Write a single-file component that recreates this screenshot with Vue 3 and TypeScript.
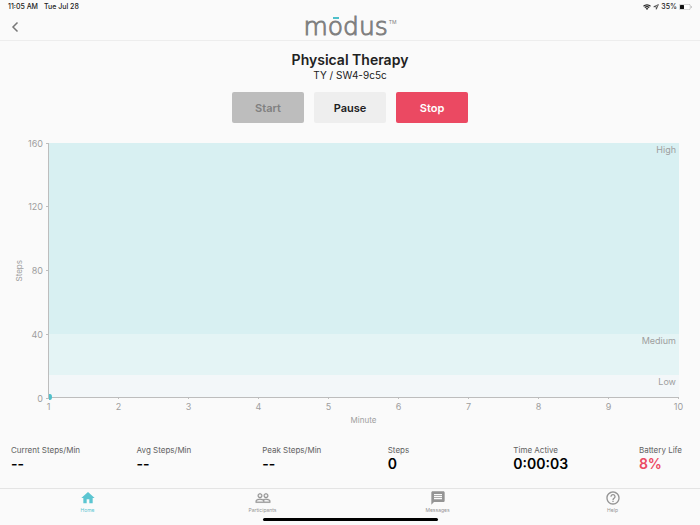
<script setup lang="ts">
interface Band {
  name: string
  from: number
  to: number
}
interface Stat {
  label: string
  value: string
  tone?: string
}

const maxSteps = 160
const yTicks: number[] = [160, 120, 80, 40, 0]
const xTicks: number[] = [1, 2, 3, 4, 5, 6, 7, 8, 9, 10]
const bands: Band[] = [
  { name: 'High', from: 40, to: 160 },
  { name: 'Medium', from: 14, to: 40 },
  { name: 'Low', from: 0, to: 14 },
]
const stats: Stat[] = [
  { label: 'Current Steps/Min', value: '--' },
  { label: 'Avg Steps/Min', value: '--' },
  { label: 'Peak Steps/Min', value: '--' },
  { label: 'Steps', value: '0' },
  { label: 'Time Active', value: '0:00:03' },
  { label: 'Battery Life', value: '8%', tone: 'alert' },
]
const bandHeight = (b: Band): string => `${((b.to - b.from) / maxSteps) * 100}%`
</script>

<template>
  <div class="app">
    <div class="status">
      <span>11:05 AM</span>
      <span>Tue Jul 28</span>
      <span class="spacer"></span>
      <svg class="wifi" viewBox="0 0 16 12" aria-hidden="true">
        <path d="M1 4.5a10 10 0 0 1 14 0M3.6 7.3a6.300 6.300 0 0 1 8.800 0" fill="none" stroke="#222" stroke-width="2.300" />
        <path d="M8 12 5.300 9.200a3.900 3.900 0 0 1 5.400 0z" fill="#222" />
      </svg>
      <svg class="locate" viewBox="0 0 12 12" aria-hidden="true">
        <path d="M10.800 1.200 1.500 5.400h5.100v5.100z" fill="none" stroke="#333" stroke-width="1.500" stroke-linejoin="round" />
      </svg>
      <span class="charge">35%</span>
      <svg class="battery" viewBox="0 0 26 12" aria-hidden="true">
        <rect x=".5" y=".5" width="22" height="11" rx="3" fill="#fff" stroke="#999" />
        <rect x="2" y="2" width="8" height="8" rx="1" fill="#111" />
        <path d="M24 4c2 .5 2 3.500 0 4z" fill="#999" />
      </svg>
    </div>

    <header class="header">
      <button class="back" type="button" aria-label="Back">
        <svg viewBox="0 0 8 12" aria-hidden="true">
          <path d="M6.500 1.500 2 6l4.500 4.500" fill="none" stroke="#777" stroke-width="1.500" />
        </svg>
      </button>
      <div class="logo">
        <span class="word">m<span class="macron">o</span>dus</span>
        <span class="tm">TM</span>
      </div>
    </header>

    <main class="main">
      <h1 class="title">Physical Therapy</h1>
      <p class="subject">TY / SW4-9c5c</p>
      <div class="actions">
        <button class="btn start" type="button" disabled>Start</button>
        <button class="btn pause" type="button">Pause</button>
        <button class="btn stop" type="button">Stop</button>
      </div>

      <section class="chart">
        <div class="y-title"><span>Steps</span></div>
        <div class="y-axis">
          <div v-for="t in yTicks" :key="t" class="y-tick"><span>{{ t }}</span><i></i></div>
        </div>
        <div class="plot">
          <div v-for="b in bands" :key="b.name" class="band" :class="b.name.toLowerCase()" :style="{ height: bandHeight(b) }">
            {{ b.name }}
          </div>
          <svg class="point" viewBox="0 0 3 6" aria-hidden="true"><path d="M0 0h1a2 3 0 0 1 0 6h-1z" fill="#50c0cb" /></svg>
        </div>
        <div class="x-axis">
          <div v-for="t in xTicks" :key="t" class="x-tick"><i></i><span>{{ t }}</span></div>
        </div>
        <div class="x-title">Minute</div>
      </section>

      <dl class="stats">
        <div v-for="s in stats" :key="s.label">
          <dt>{{ s.label }}</dt>
          <dd :class="s.tone">{{ s.value }}</dd>
        </div>
      </dl>
    </main>

    <nav class="tabs">
      <a class="tab active" href="#home">
        <svg viewBox="0 0 24 24" aria-hidden="true"><path d="M10 20v-6h4v6h5v-8h3L12 3 2 12h3v8z" fill="currentColor" /></svg>
        Home
      </a>
      <a class="tab" href="#participants">
        <svg viewBox="0 0 24 24" aria-hidden="true">
          <path d="M16.500 13c-1.200 0-3.070.340-4.500 1-1.430-.670-3.300-1-4.500-1C5.330 13 1 14.080 1 16.250V19h22v-2.750c0-2.170-4.330-3.250-6.500-3.250zm-4 4.500h-10v-1.250c0-.540 2.560-1.750 5-1.750s5 1.210 5 1.750v1.250zm9 0H14v-1.250c0-.460-.2-.860-.520-1.220.880-.3 1.960-.530 3.020-.530 2.440 0 5 1.210 5 1.750v1.250zM7.500 12c1.930 0 3.500-1.570 3.500-3.500S9.430 5 7.500 5 4 6.570 4 8.500 5.570 12 7.500 12zm0-5.500c1.100 0 2 .9 2 2s-.9 2-2 2-2-.9-2-2 .9-2 2-2zm9 5.500c1.930 0 3.500-1.570 3.500-3.500S18.430 5 16.500 5 13 6.570 13 8.500s1.570 3.500 3.500 3.500zm0-5.500c1.100 0 2 .9 2 2s-.9 2-2 2-2-.9-2-2 .9-2 2-2z" fill="currentColor" stroke="currentColor" stroke-width=".4" />
        </svg>
        Participants
      </a>
      <a class="tab" href="#messages">
        <svg viewBox="0 0 24 24" aria-hidden="true">
          <path d="M20 2H4c-1.100 0-2 .9-2 2v18l4-4h14c1.100 0 2-.9 2-2V4c0-1.100-.9-2-2-2z" fill="currentColor" />
          <path d="M6 7h12M6 10h12M6 13h12" stroke="#fafafa" stroke-width="1.700" />
        </svg>
        Messages
      </a>
      <a class="tab" href="#help">
        <svg viewBox="0 0 24 24" aria-hidden="true">
          <path d="M11 18h2v-2h-2v2zm1-16C6.480 2 2 6.480 2 12s4.480 10 10 10 10-4.480 10-10S17.520 2 12 2zm0 18c-4.410 0-8-3.590-8-8s3.590-8 8-8 8 3.590 8 8-3.590 8-8 8zm0-14c-2.210 0-4 1.790-4 4h2c0-1.100.9-2 2-2s2 .9 2 2c0 2-3 1.750-3 5h2c0-2.250 3-2.500 3-5 0-2.210-1.790-4-4-4z" fill="currentColor" />
        </svg>
        Help
      </a>
    </nav>
    <div class="home-bar"><i></i></div>
  </div>
</template>

<style>
body {
  margin: 0;
  background: #fafafa;
}
</style>

<style scoped>
.app {
  min-height: 100vh;
  display: flex;
  flex-direction: column;
  background: #fafafa;
  color: #212121;
  font-family: Inter, Roboto, sans-serif;
}
button {
  font-family: inherit;
  border: 0;
  padding: 0;
}
.status {
  display: flex;
  align-items: center;
  gap: 6px;
  height: 13px;
  padding: 0 8px;
  font-size: 7px;
  font-weight: 500;
}
.spacer {
  flex: 1;
}
.wifi {
  width: 8px;
  height: 6px;
}
.locate {
  width: 6px;
  height: 6px;
  margin-left: -4px;
}
.charge {
  margin: 0 -4px;
}
.battery {
  width: 13px;
  height: 6px;
}
.header {
  display: grid;
  grid-template-columns: 1fr auto 1fr;
  height: 27px;
  align-items: center;
  border-bottom: 1px solid #ededed;
}
.back {
  justify-self: start;
  margin-left: 11px;
  width: 10px;
  height: 12px;
  background: none;
}
.back svg {
  display: block;
  width: 8px;
  height: 12px;
}
.logo {
  display: flex;
  align-items: flex-start;
  gap: 1px;
  color: #808080;
}
.word {
  font: 200 25px/28px "DejaVu Sans", sans-serif;
  -webkit-text-stroke: 1px #808080;
}
.macron {
  position: relative;
}
.macron::before {
  content: "";
  position: absolute;
  left: 5px;
  top: 5px;
  width: 6px;
  height: 2px;
  background: #4fc0ca;
}
.tm {
  padding-top: 6px;
  font-size: 5px;
  line-height: 6px;
}
.main {
  flex: 1;
  display: flex;
  flex-direction: column;
}
.title {
  margin: 10px 0 0;
  font-size: 14px;
  line-height: 17px;
  font-weight: 600;
  text-align: center;
}
.subject {
  margin: 0;
  font-size: 10px;
  line-height: 15px;
  text-align: center;
}
.actions {
  display: flex;
  justify-content: center;
  gap: 10px;
  padding-top: 9px;
}
.btn {
  width: 72px;
  height: 31px;
  border-radius: 2px;
  font-size: 11px;
  line-height: 30px;
  font-weight: 600;
}
.start {
  background: #bdbdbd;
  color: #808080;
}
.pause {
  background: #eee;
  color: #212121;
}
.stop {
  background: #eb4962;
  color: #fff;
}
.chart {
  flex: 1;
  display: grid;
  grid-template-columns: 14px 22px 1fr;
  grid-template-rows: minmax(160px, 1fr) 15px 14px;
  padding: 20px 21px 0 12px;
  color: #9e9e9e;
  font-size: 9px;
}
.y-title {
  display: flex;
  align-items: center;
  justify-content: center;
  font-size: 8px;
}
.y-title span {
  writing-mode: vertical-rl;
  transform: rotate(180deg);
}
.y-axis {
  display: flex;
  flex-direction: column;
  justify-content: space-between;
}
.y-tick {
  height: 0;
  display: flex;
  align-items: center;
  justify-content: flex-end;
  gap: 3px;
}
.y-tick i {
  width: 2px;
  height: 1px;
  background: #bdbdbd;
}
.plot {
  position: relative;
  border-left: 1px solid #bdbdbd;
  border-bottom: 1px solid #bdbdbd;
}
.band {
  box-sizing: border-box;
  padding: 1px 3px 0 0;
  line-height: 12px;
  text-align: right;
}
.high {
  background: #d8f0f2;
}
.medium {
  background: #e4f4f5;
}
.low {
  background: #f3f7f9;
}
.point {
  position: absolute;
  left: 0;
  bottom: -3px;
  width: 3px;
  height: 6px;
}
.x-axis {
  grid-column: 3;
  display: flex;
  justify-content: space-between;
}
.x-tick {
  width: 1px;
  display: flex;
  flex-direction: column;
  align-items: center;
  line-height: 16px;
}
.x-tick i {
  width: 1px;
  height: 1px;
  flex: none;
  background: #bdbdbd;
}
.x-title {
  grid-column: 3;
  font-size: 8px;
  line-height: 14px;
  text-align: center;
}
.stats {
  display: grid;
  grid-template-columns: repeat(5, 1fr) auto;
  margin: 0;
  padding: 17px 18px 17px 11px;
}
.stats dt {
  font-size: 8px;
  line-height: 12px;
  color: #616161;
  white-space: nowrap;
}
.stats dd {
  margin: 0;
  font-size: 14px;
  line-height: 15px;
  font-weight: 600;
  color: #000;
}
.stats .alert {
  color: #eb4962;
}
.tabs {
  display: grid;
  grid-template-columns: repeat(4, 1fr);
  border-top: 1px solid #e4e4e4;
}
.tab {
  display: flex;
  flex-direction: column;
  align-items: center;
  padding-top: 1px;
  color: #949494;
  font-size: 5px;
  line-height: 8px;
  text-decoration: none;
}
.tab svg {
  width: 16px;
  height: 16px;
}
.tab.active {
  color: #5bc5d1;
}
.home-bar {
  display: flex;
  justify-content: center;
  padding: 4px 0;
}
.home-bar i {
  width: 25%;
  height: 3px;
  border-radius: 2px;
  background: #000;
}
</style>
